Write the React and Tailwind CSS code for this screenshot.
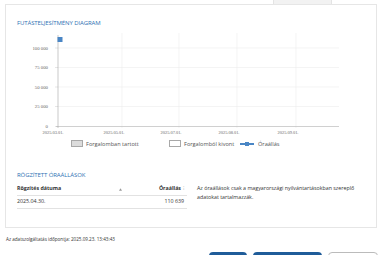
import React from "react";

const yTicks = [
  { y: 48, label: "100 000" },
  { y: 67.5, label: "75 000" },
  { y: 87, label: "50 000" },
  { y: 106.5, label: "25 000" },
  { y: 126.5, label: "0" },
];

const xTicks = [
  { x: 58, label: "2025.03.01." },
  { x: 122, label: "2025.05.01." },
  { x: 179, label: "2025.07.01." },
  { x: 237, label: "2025.08.01." },
  { x: 296, label: "2025.09.01." },
];

const Chart = () => (
  <svg width="370" height="107" viewBox="6 30 370 107" className="block">
    {yTicks.map((t) => (
      <g key={t.label}>
        {t.label !== "0" && (
          <line x1="58" x2="339" y1={t.y} y2={t.y} stroke="#ececec" strokeWidth="0.6" />
        )}
        <line x1="55" x2="58" y1={t.y} y2={t.y} stroke="#ccc" strokeWidth="0.5" />
        <text
          x="48"
          y={t.y + 1.6}
          textAnchor="end"
          fontSize="4.8"
          fill="#666"
          fontFamily="'Liberation Serif', serif"
        >
          {t.label}
        </text>
      </g>
    ))}
    {xTicks.map((t, i) => (
      <g key={t.label}>
        {i > 0 && <line x1={t.x} x2={t.x} y1="33" y2="128" stroke="#ececec" strokeWidth="0.6" />}
        <text
          x={i === 0 ? t.x - 5 : t.x - 8}
          y="133.5"
          textAnchor="middle"
          fontSize="4.4"
          fill="#666"
          fontFamily="'Liberation Serif', serif"
        >
          {t.label}
        </text>
      </g>
    ))}
    <line x1="56" x2="339" y1="126.5" y2="126.5" stroke="#bbb" strokeWidth="0.7" />
    <line x1="58" x2="58" y1="35" y2="128" stroke="#a5a5a5" strokeWidth="0.6" />
    <rect x="57.5" y="37" width="5" height="5" fill="#4a86c5" />
  </svg>
);

export default function App() {
  return (
    <div
      className="w-[382px] h-[255px] overflow-hidden bg-white text-[#333]"
      style={{ fontFamily: "'Open Sans', 'Liberation Sans', sans-serif" }}
    >
      {/* top tab */}
      <div className="h-[4px] flex">
        <div className="ml-[273px] w-[59px] h-[4px] bg-[#f2f2f2] border-x border-[#e4e4e4]" />
      </div>

      {/* card */}
      <div className="mx-[5px] h-[224px] border border-[#e6e6e6] flex flex-col">
        <div className="pt-[14px] pl-[11px] text-[6px] leading-[8px] text-[#2f72b4] uppercase tracking-[-0.1px]">
          Futásteljesítmény diagram
        </div>

        <div className="mt-[3px]">
          <Chart />
        </div>

        {/* legend */}
        <div className="mt-[2px] h-[10px] flex items-center text-[5.6px] text-[#555]">
          <div className="ml-[65px] w-[98px] flex items-center">
            <span className="w-[12px] h-[7px] bg-[#dcdcdc] border border-[#a8a8a8]" />
            <span className="ml-[3px]">Forgalomban tartott</span>
          </div>
          <div className="w-[71px] flex items-center">
            <span className="w-[12px] h-[7px] bg-white border border-[#a8a8a8]" />
            <span className="ml-[3px]">Forgalomból kivont</span>
          </div>
          <div className="flex items-center">
            <span className="relative w-[14px] h-[1.5px] bg-[#4a86c5]">
              <span className="absolute left-[5px] top-[-1.5px] w-[4px] h-[4px] bg-[#4a86c5]" />
            </span>
            <span className="ml-[4px]">Óraállás</span>
          </div>
        </div>

        {/* recorded readings */}
        <div className="mt-[22px] pl-[11px] text-[6px] leading-[8px] text-[#2f72b4] uppercase tracking-[-0.1px]">
          Rögzített óraállások
        </div>

        <div className="mt-[4px] pl-[11px] flex">
          <div className="w-[170px] text-[5.3px]">
            <div className="h-[13px] flex items-center border-b border-[#e2e2e2] font-bold">
              <span className="w-[102px]">Rögzítés dátuma</span>
              <svg width="3" height="3" viewBox="0 0 6 5">
                <path d="M3 0 L6 5 L0 5 Z" fill="#9a9a9a" />
              </svg>
              <span className="ml-auto">Óraállás</span>
              <span className="ml-[2px] mr-[3px] text-[#aaa] font-normal">⁝</span>
            </div>
            <div className="h-[13px] flex items-center border-b border-[#e2e2e2]">
              <span>2025.04.30.</span>
              <span className="ml-auto mr-[3px]">110 639</span>
            </div>
          </div>
          <div className="ml-[10px] w-[168px] text-[5.3px] leading-[9px] pt-[1px]">
            Az óraállások csak a magyarországi nyilvántartásokban szereplő adatokat tartalmazzák.
          </div>
        </div>
      </div>

      <div className="mt-[7px] ml-[6px] text-[4.6px] leading-[8px] text-[#333]">
        Az adatszolgáltatás időpontja: 2025.09.23. 13:43:43
      </div>

      <div className="mt-[9px] flex text-[5.5px]">
        <div className="ml-[209px] w-[38px] h-[14px] rounded-[4px] bg-[#1f5c99] text-white text-center pt-[3px]">
          Vissza
        </div>
        <div className="ml-[6px] w-[69px] h-[14px] rounded-[4px] bg-[#1f5c99] text-white text-center pt-[3px]">
          Új lekérdezés indítása
        </div>
        <div className="ml-[6px] w-[50px] h-[14px] rounded-[4px] bg-white border border-[#bbb] text-[#333] text-center pt-[3px]">
          Nyomtatás
        </div>
      </div>
    </div>
  );
}
